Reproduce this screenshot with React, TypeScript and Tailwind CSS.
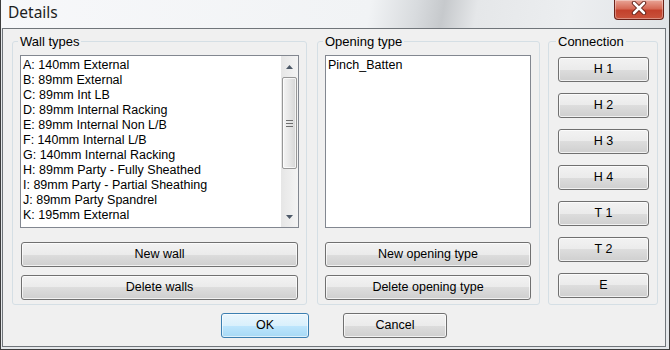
import React from 'react'

const wallTypes = [
  'A: 140mm External',
  'B: 89mm External',
  'C: 89mm Int LB',
  'D: 89mm Internal Racking',
  'E: 89mm Internal Non L/B',
  'F: 140mm Internal L/B',
  'G: 140mm Internal Racking',
  'H: 89mm Party - Fully Sheathed',
  'I: 89mm Party - Partial Sheathing',
  'J: 89mm Party Spandrel',
  'K: 195mm External',
]

const connections = ['H 1', 'H 2', 'H 3', 'H 4', 'T 1', 'T 2', 'E']

const Button = ({ children, className = '', primary = false }: { children: React.ReactNode; className?: string; primary?: boolean }) => (
  <button
    type="button"
    className={`flex h-[25px] items-center justify-center rounded-[3px] border text-[12.5px] leading-none text-black ${
      primary
        ? 'border-[#3c7fb1] bg-[linear-gradient(to_bottom,#eaf6fd_0%,#d9f0fc_50%,#bee6fd_50%,#a7d9f5_100%)] shadow-[inset_0_0_0_1px_rgba(255,255,255,0.6)]'
        : 'border-[#707070] bg-[linear-gradient(to_bottom,#f2f2f2_0%,#ebebeb_50%,#dddddd_50%,#cfcfcf_100%)] shadow-[inset_0_0_0_1px_rgba(255,255,255,0.7)]'
    } ${className}`}
  >
    {children}
  </button>
)

const Group = ({ title, className = '', children }: { title: string; className?: string; children: React.ReactNode }) => (
  <fieldset className={`flex flex-col rounded-[3px] border border-[#d5dfe5] ${className}`}>
    <legend className="-ml-[2px] px-[2px] text-[13px] leading-[15px] text-black">{title}</legend>
    {children}
  </fieldset>
)

const Arrow = ({ down = false }: { down?: boolean }) => (
  <svg width="7" height="4" viewBox="0 0 7 4">
    <path d={down ? 'M0 0 H7 L3.5 4 Z' : 'M0 4 H7 L3.5 0 Z'} fill="#4d5968" />
  </svg>
)

const ScrollBar = () => (
  <div className="flex w-[17px] flex-col bg-[linear-gradient(to_right,#e6e6e6,#f4f4f4)]">
    <div className="flex h-[21px] items-center justify-center">
      <Arrow />
    </div>
    <div className="mx-[1px] flex h-[92px] flex-col items-center justify-center gap-[2px] rounded-[2px] border border-[#979797] bg-[linear-gradient(to_right,#f4f4f4,#e6e6e6_50%,#d6d6d6)] shadow-[inset_0_0_0_1px_rgba(255,255,255,0.7)]">
      <div className="h-[1px] w-[7px] bg-[#6f6f6f]" />
      <div className="h-[1px] w-[7px] bg-[#6f6f6f]" />
      <div className="h-[1px] w-[7px] bg-[#6f6f6f]" />
    </div>
    <div className="flex-1" />
    <div className="flex h-[21px] items-center justify-center">
      <Arrow down />
    </div>
  </div>
)

export default function App() {
  return (
    <div className="flex h-[350px] w-[670px] flex-col border-x border-b border-[#3d3d3d] bg-[#e4e7ea] font-['Liberation_Sans',Arial,sans-serif]">
      <div className="flex h-[28px] items-start bg-[linear-gradient(100deg,#f7f8fa_0%,#f1f3f5_55%,#d8dbde_62%,#c6c9cc_66%,#e5e7e9_71%,#eceef0_85%,#e0e3e6_100%)]">
        <span className="pl-[7px] pt-[3px] font-['Noto_Sans',sans-serif] text-[15.5px] leading-[18px] text-[#1e1e1e]">Details</span>
        <div className="ml-auto mr-[5px] flex h-[20px] w-[50px] items-center justify-center rounded-b-[4px] border border-t-0 border-[#6b2219] bg-[linear-gradient(to_bottom,#e9a597_0%,#d66a56_45%,#c3412c_55%,#c9533c_100%)] shadow-[inset_0_0_0_1px_rgba(255,255,255,0.35)]">
          <svg width="18" height="14" viewBox="0 0 18 14" className="-mt-[4px]">
            <path d="M4 2 L14 12 M14 2 L4 12" stroke="#5b1b12" strokeWidth="4.4" strokeLinecap="round" />
            <path d="M4 2 L14 12 M14 2 L4 12" stroke="#ffffff" strokeWidth="2.6" strokeLinecap="round" />
          </svg>
        </div>
      </div>

      <div className="mb-[2px] ml-[1px] mr-[3px] flex flex-1 flex-col border border-[#70757a] bg-[#f0f0f0]">
        <div className="flex gap-x-[10px] pl-[9px] pt-[5px]">
          <Group title="Wall types" className="w-[295px] px-[7px] pb-[4px] pt-[6px]">
            <div className="flex h-[173px] border border-[#828790] bg-white">
              <ul className="flex-1 pl-[2px] pt-[1.5px] text-[12.5px] leading-[15.1px] text-black">
                {wallTypes.map((w) => (
                  <li key={w} className="whitespace-nowrap">{w}</li>
                ))}
              </ul>
              <ScrollBar />
            </div>
            <Button className="mx-[1px] mt-[14px]">New wall</Button>
            <Button className="mx-[1px] mt-[8px]">Delete walls</Button>
          </Group>

          <div className="flex gap-x-[8px]">
            <Group title="Opening type" className="w-[223px] pl-[7px] pr-[8px] pb-[4px] pt-[6px]">
              <div className="h-[173px] border border-[#828790] bg-white pl-[2px] pt-[1.5px] text-[12.5px] leading-[15.1px] text-black">
                Pinch_Batten
              </div>
              <Button className="mt-[14px]">New opening type</Button>
              <Button className="mt-[8px]">Delete opening type</Button>
            </Group>

            <Group title="Connection" className="w-[110px] gap-y-[11px] pl-[9px] pr-[8px] pt-[8px]">
              {connections.map((c) => (
                <Button key={c}>{c}</Button>
              ))}
            </Group>
          </div>
        </div>

        <div className="mt-[8px] flex justify-center gap-x-[34px]">
          <Button primary className="w-[88px]">OK</Button>
          <Button className="w-[104px]">Cancel</Button>
        </div>
      </div>
    </div>
  )
}
